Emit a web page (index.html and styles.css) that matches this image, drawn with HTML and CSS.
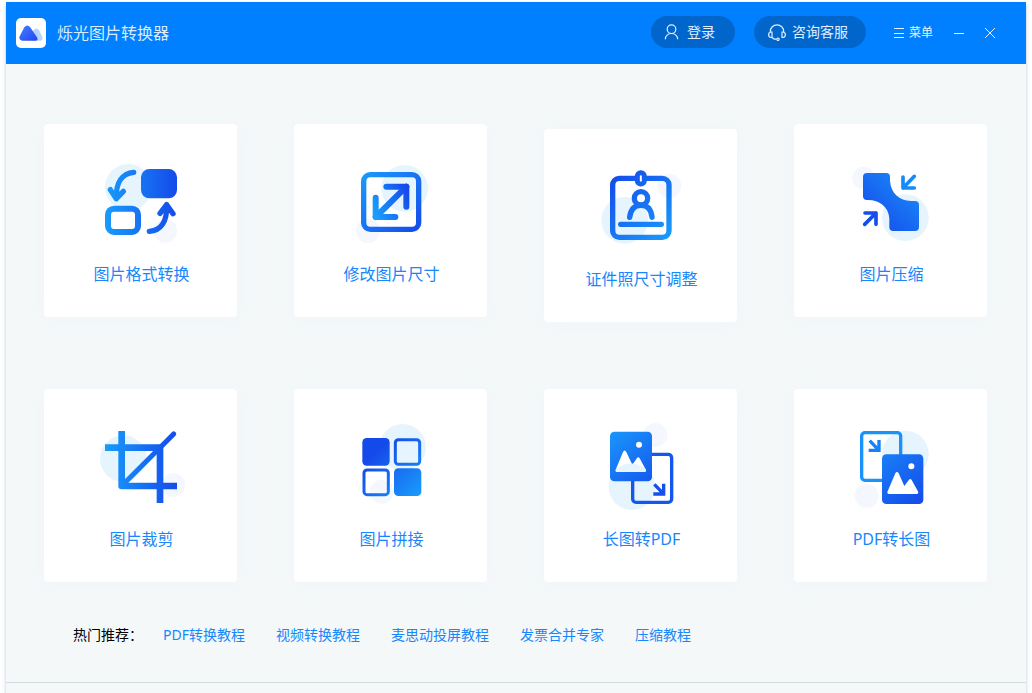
FILE: index.html
```html
<!DOCTYPE html>
<html lang="zh-CN">
<head>
<meta charset="utf-8">
<meta name="viewport" content="width=device-width, initial-scale=1">
<title>烁光图片转换器</title>
<link rel="stylesheet" href="styles.css">
</head>
<body>
<svg class="defs" width="0" height="0" aria-hidden="true">
  <defs>
    <linearGradient id="right" gradientUnits="userSpaceOnUse" x1="45" y1="150" x2="262" y2="150"><stop offset="0" stop-color="#189cfb"/><stop offset="1" stop-color="#154aea"/></linearGradient>
    <linearGradient id="down" gradientUnits="userSpaceOnUse" x1="64" y1="60" x2="244" y2="245"><stop offset="0" stop-color="#1a9dfc"/><stop offset="1" stop-color="#154aea"/></linearGradient>
    <linearGradient id="arrows" gradientUnits="userSpaceOnUse" x1="100" y1="180" x2="207" y2="130"><stop offset="0" stop-color="#1a9dfc"/><stop offset="1" stop-color="#154aea"/></linearGradient>
    <linearGradient id="badge" gradientUnits="userSpaceOnUse" x1="90" y1="80" x2="274" y2="270"><stop offset="0" stop-color="#154aea"/><stop offset="1" stop-color="#1a9dfc"/></linearGradient>
    <linearGradient id="up" gradientUnits="userSpaceOnUse" x1="80" y1="230" x2="225" y2="80"><stop offset="0" stop-color="#154aea"/><stop offset="1" stop-color="#1a8dfa"/></linearGradient>
    <linearGradient id="tiles" gradientUnits="userSpaceOnUse" x1="110" y1="110" x2="244" y2="243"><stop offset="0" stop-color="#154aea"/><stop offset="1" stop-color="#1a9dfc"/></linearGradient>
    <linearGradient id="sheet" gradientUnits="userSpaceOnUse" x1="60" y1="50" x2="186" y2="198"><stop offset="0" stop-color="#1a96fb"/><stop offset="1" stop-color="#155aee"/></linearGradient>
    <linearGradient id="page" gradientUnits="userSpaceOnUse" x1="126" y1="118" x2="249" y2="266"><stop offset="0" stop-color="#187ff7"/><stop offset="1" stop-color="#154aea"/></linearGradient>
    <linearGradient id="peak" x1="0" y1="0" x2="1" y2="1"><stop offset="0" stop-color="#3f83fb"/><stop offset="1" stop-color="#2642f3"/></linearGradient>
  </defs>
</svg>

<div class="window">
  <header class="titlebar">
    <svg class="logo" viewBox="0 0 90 90" aria-hidden="true">
      <rect width="90" height="90" rx="15" fill="#fff"/>
      <path d="M52 37Q60 26 69 36L79 57Q82 68 71 68H48Z" fill="#b3d6fb"/>
      <path d="M25 28Q33 17 42 27L62 56Q70 68 56 68H20Q7 67 11 55Z" fill="url(#peak)"/>
    </svg>
    <h1 class="title">烁光图片转换器</h1>
    <div class="account">
      <button class="pill" type="button">
        <svg class="pill-icon" viewBox="0 0 18 18" aria-hidden="true"><circle cx="8.500" cy="6.200" r="4.300"/><path d="M2.300 16.300C2.300 12.800 5 10.500 8.500 10.500S14.700 12.800 14.700 16.300"/></svg>
        <span>登录</span>
      </button>
      <button class="pill" type="button">
        <svg class="pill-icon" viewBox="0 0 18 18" aria-hidden="true"><path d="M2.300 9.500V8.500a6.700 6.700 0 0 1 13.400 0v1M4 9v5.500H3Q.6 14 .6 11.700T3 9ZM14 9v5.500h1Q17.400 14 17.400 11.700T15 9ZM4 14.500Q5.500 16.300 8.500 16.300"/><circle cx="10" cy="16.300" r="1.200"/></svg>
        <span>咨询客服</span>
      </button>
    </div>
    <div class="controls">
      <button class="control" type="button">
        <svg class="control-icon" viewBox="0 0 10 10" aria-hidden="true"><path d="M0 .5H10M0 5.500H10M0 9.500H10"/></svg>
        <span>菜单</span>
      </button>
      <button class="control" type="button" aria-label="最小化">
        <svg class="control-icon" viewBox="0 0 10 10" aria-hidden="true"><path d="M0 5.500H10"/></svg>
      </button>
      <button class="control" type="button" aria-label="关闭">
        <svg class="control-icon" viewBox="0 0 10 10" aria-hidden="true"><path d="M0 0L10 10M10 0L0 10"/></svg>
      </button>
    </div>
  </header>

  <main class="content">
    <div class="tools">
      <button class="card" type="button">
        <svg class="card-icon" viewBox="-12 24 330 270" aria-hidden="true">
          <circle cx="115" cy="112" r="70" fill="#e6f4fe"/><circle cx="226" cy="243" r="35" fill="#f4f7fe"/>
          <rect x="153" y="57" width="108" height="88" rx="25" fill="url(#right)"/>
          <rect x="54" y="176" width="90" height="70" rx="18" fill="#fff" stroke="url(#right)" stroke-width="18"/>
          <g fill="none" stroke="url(#right)" stroke-width="16" stroke-linecap="round" stroke-linejoin="round"><path d="M131 67C98 70 77 96 79 146M61 119L79 146L100 124"/><path d="M178 244C212 242 232 216 230 164M210 190L230 164L249 191"/></g>
        </svg>
        <span class="card-label">图片格式转换</span>
      </button>
      <button class="card" type="button">
        <svg class="card-icon" viewBox="-12 24 330 270" aria-hidden="true">
          <circle cx="194" cy="115" r="70" fill="#e6f4fe"/><circle cx="84" cy="243" r="36" fill="#f4f7fe"/>
          <rect x="71" y="74" width="165" height="164" rx="20" fill="none" stroke="url(#down)" stroke-width="16"/>
          <g fill="none" stroke="url(#arrows)" stroke-width="18" stroke-linecap="round" stroke-linejoin="round"><path d="M139 110H199V170M107 143V201H166"/><path d="M107 201L199 110"/></g>
        </svg>
        <span class="card-label">修改图片尺寸</span>
      </button>
      <button class="card card--active" type="button">
        <svg class="card-icon" viewBox="18 39 330 270" aria-hidden="true">
          <circle cx="134" cy="211" r="70" fill="#e6f4fe"/><circle cx="268" cy="107" r="36" fill="#f4f7fe"/>
          <rect x="98" y="85" width="169" height="177" rx="20" fill="none" stroke="url(#badge)" stroke-width="16"/>
          <rect x="172" y="68" width="21" height="34" rx="10" fill="#fff" stroke="url(#badge)" stroke-width="15"/>
          <g fill="none" stroke="url(#badge)" stroke-width="16" stroke-linecap="round"><circle cx="183" cy="145" r="20"/><path d="M149 202Q153 166 183 166T216 202M122 223H244"/></g>
        </svg>
        <span class="card-label">证件照尺寸调整</span>
      </button>
      <button class="card" type="button">
        <svg class="card-icon" viewBox="-12 24 330 270" aria-hidden="true">
          <circle cx="71" cy="84" r="34" fill="#f4f7fe"/><circle cx="196" cy="203" r="70" fill="#e6f4fe"/>
          <path d="M81 69H139Q150 69 150 81V93C153 130 178 152 213 153H225Q237 153 237 165V231Q237 243 225 243H160Q148 243 148 231V205C146 170 117 150 85 150H81Q69 150 69 138V81Q69 69 81 69Z" fill="url(#up)"/>
          <g fill="none" stroke-width="11" stroke-linecap="round" stroke-linejoin="round"><path stroke="#168af9" d="M223 79L189 114M189 81V114H223"/><path stroke="#154eeb" d="M74 223L108 189M75 189H108V223"/></g>
        </svg>
        <span class="card-label">图片压缩</span>
      </button>
      <button class="card" type="button">
        <svg class="card-icon" viewBox="-12 24 330 270" aria-hidden="true">
          <circle cx="100" cy="131" r="70" fill="#e6f4fe"/><circle cx="250" cy="210" r="36" fill="#f4f7fe"/>
          <path d="M118 204H201V121Z" fill="#fff"/>
          <g fill="none" stroke="url(#right)" stroke-linejoin="round"><path stroke-width="20" d="M95 48V213H261M45 98H210V264"/><path stroke-width="15" d="M100 208L251 57" stroke-linecap="round"/></g>
        </svg>
        <span class="card-label">图片裁剪</span>
      </button>
      <button class="card" type="button">
        <svg class="card-icon" viewBox="-12 24 330 270" aria-hidden="true">
          <circle cx="188" cy="97" r="70" fill="#e6f4fe"/><circle cx="125" cy="230" r="36" fill="#f4f7fe"/>
          <g fill="url(#tiles)"><rect x="67" y="69" width="82" height="83" rx="13"/><rect x="162" y="160" width="82" height="83" rx="13"/></g>
          <rect x="67" y="160" width="82" height="83" rx="13" fill="#fff"/><path d="M89 230A36 36 0 0 1 125 194L145 200V238H90Z" fill="#f4f7fe"/>
          <g fill="none" stroke="url(#tiles)" stroke-width="9"><rect x="166" y="74" width="73" height="74" rx="9"/><rect x="72" y="165" width="73" height="74" rx="9"/></g>
        </svg>
        <span class="card-label">图片拼接</span>
      </button>
      <button class="card" type="button">
        <svg class="card-icon" viewBox="-12 24 330 270" aria-hidden="true">
          <circle cx="196" cy="60" r="36" fill="#f4f7fe"/><circle cx="126" cy="215" r="70" fill="#e6f4fe"/>
          <rect x="128" y="118" width="117" height="144" rx="10" fill="none" stroke="#1557ee" stroke-width="10"/>
          <rect x="60" y="50" width="126" height="149" rx="13" fill="url(#sheet)"/>
          <circle cx="147" cy="89" r="9" fill="#fff"/>
          <path d="M77 164L99 111Q104 102 109 111L127 149L141 129Q145 124 149 130L168 165Q169 171 163 171H80Q75 170 77 164Z" fill="#fff"/>
          <path d="M78 163Q118 130 164 158L168 165Q169 171 163 171H80Q75 170 78 163Z" fill="#e6f4fe"/>
          <path d="M193 208L221 237M221 206V237H190" fill="none" stroke="#154fec" stroke-width="10"/>
        </svg>
        <span class="card-label">长图转PDF</span>
      </button>
      <button class="card" type="button">
        <svg class="card-icon" viewBox="-12 24 330 270" aria-hidden="true">
          <circle cx="196" cy="117" r="70" fill="#e6f4fe"/><circle cx="80" cy="243" r="36" fill="#f4f7fe"/>
          <rect x="65" y="53" width="117" height="143" rx="10" fill="none" stroke="#1992fb" stroke-width="10"/>
          <rect x="126" y="118" width="124" height="149" rx="13" fill="url(#page)"/>
          <circle cx="214" cy="154" r="9" fill="#fff"/>
          <path d="M142 231L166 175Q171 167 176 175L193 213L207 194Q211 189 215 195L235 231Q236 237 230 237H146Q141 236 142 231Z" fill="#fff"/>
          <path d="M89 77L117 106M117 75V106H86" fill="none" stroke="#1682f8" stroke-width="10"/>
        </svg>
        <span class="card-label">PDF转长图</span>
      </button>
    </div>

    <nav class="recommend" aria-label="热门推荐">
      <span class="recommend-label">热门推荐：</span>
      <div class="recommend-links">
        <a href="#pdf">PDF转换教程</a>
        <a href="#video">视频转换教程</a>
        <a href="#cast">麦思动投屏教程</a>
        <a href="#invoice">发票合并专家</a>
        <a href="#zip">压缩教程</a>
      </div>
    </nav>
  </main>
  <footer class="statusbar"></footer>
</div>
</body>
</html>
```

FILE: styles.css
```css
* {
  box-sizing: border-box;
}

body {
  margin: 0;
  padding: 2px 6px 0;
  background: #fff;
  font-family: "Noto Sans", "Noto Sans CJK SC", sans-serif;
  font-size: 14px;
}

button {
  margin: 0;
  padding: 0;
  border: 0;
  background: none;
  color: inherit;
  font: inherit;
  cursor: pointer;
}

.defs {
  position: absolute;
}

.window {
  display: flex;
  flex-direction: column;
  min-height: calc(100vh - 2px);
  background: #f4f8f9;
  box-shadow: 0 2px 4px #b9c8e4;
}

.titlebar {
  display: flex;
  align-items: center;
  height: 62px;
  padding: 0 31px 0 10px;
  background: #0080ff;
  color: #fff;
}

.logo {
  width: 30px;
  height: 30px;
}

.title {
  margin: 0 auto 0 11px;
  color: #d9ecff;
  font-size: 16px;
  font-weight: 400;
  line-height: 24px;
}

.account {
  display: flex;
  gap: 19px;
  padding-bottom: 2px;
}

.pill {
  display: flex;
  align-items: center;
  gap: 6px;
  height: 32px;
  padding: 0 18px 0 14px;
  border-radius: 16px;
  background: #0066cc;
  color: #e0eeff;
  line-height: 20px;
}

.pill:first-child {
  padding: 0 20px 0 12px;
}

.pill-icon {
  width: 18px;
  height: 18px;
  fill: none;
  stroke: #e0eeff;
  stroke-width: 1.2;
}

.controls {
  display: flex;
  align-items: center;
  gap: 21px;
  margin-left: 28px;
}

.control {
  display: flex;
  align-items: center;
  gap: 5px;
  color: #e6f3ff;
  font-size: 12px;
  line-height: 18px;
}

.control-icon {
  width: 10px;
  height: 10px;
  fill: none;
  stroke: #e6f3ff;
  overflow: visible;
}

.content {
  flex: 1;
  padding: 60px 39px 0 38px;
}

.tools {
  display: grid;
  grid-template-columns: repeat(4, 1fr);
  align-items: start;
  gap: 67px 57px;
}

.card {
  display: flex;
  flex-direction: column;
  align-items: center;
  padding: 34px 0 31px;
  border-radius: 4px;
  background: #fff;
  box-shadow: 0 2px 16px #f0f5f9;
  color: #1787fb;
}

.card--active {
  margin-top: 5px;
}

.card-icon {
  width: 110px;
  height: 90px;
}

.card-label {
  margin-top: 14px;
  padding-left: 2px;
  font-size: 16px;
  line-height: 24px;
}

.recommend {
  display: flex;
  gap: 20px;
  padding: 42px 0 0 29px;
  color: #000;
  line-height: 22px;
}

.recommend-links {
  display: flex;
  gap: 31px;
}

.recommend-links a {
  color: #1787fb;
  text-decoration: none;
}

.statusbar {
  height: 11px;
  border-top: 1px solid #d5dcdf;
}
```
